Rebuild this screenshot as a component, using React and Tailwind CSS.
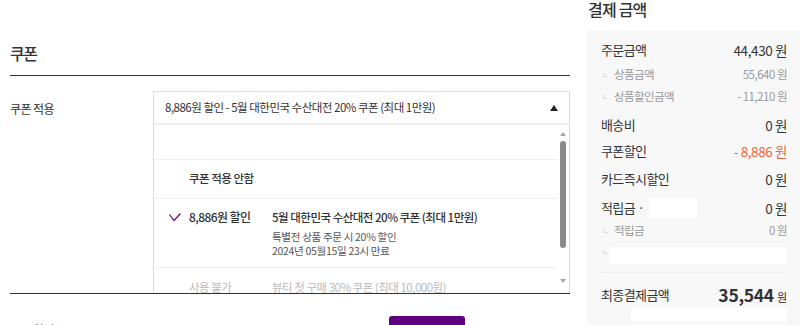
const font = "font-['Noto_Sans_CJK_KR','Noto_Sans',sans-serif]"

function Check() {
  return (
    <svg width="12" height="9" viewBox="0 0 12 9" className="shrink-0">
      <polyline points="0.5,1.5 5,7.5 11.5,0.5" fill="none" stroke="#5f0080" strokeWidth="1.2" />
    </svg>
  )
}

function Row({ label, value, className = '', valueClass = 'text-[#333]', children }) {
  return (
    <div className={`flex items-center justify-between h-[20px] ${className}`}>
      <div className="flex items-center text-[13px] text-[#333] tracking-[-0.6px]">
        {label}
        {children}
      </div>
      <div className={`text-[13.5px] tracking-[-0.4px] ${valueClass}`}>{value}</div>
    </div>
  )
}

function SubRow({ label, value, className = '' }) {
  return (
    <div className={`flex items-center justify-between h-[20px] ${className}`}>
      <div className="flex items-center text-[11.5px] text-[#999] tracking-[-0.6px]">
        <span className="text-[8px] text-[#ccc] w-[12px] ml-[1px]">ㄴ</span>
        {label}
      </div>
      <div className="text-[11.5px] text-[#999] tracking-[-0.5px]">{value}</div>
    </div>
  )
}

export default function App() {
  return (
    <div className={`w-[800px] h-[325px] overflow-hidden bg-white flex ${font}`}>
      {/* 쿠폰 */}
      <div className="w-[560px] ml-[10px] shrink-0">
        <div className="pt-[41px] pb-[10px] border-b border-[#333]">
          <h2 className="text-[16px] leading-[24px] font-medium text-[#333] tracking-[-1.5px]">쿠폰</h2>
        </div>

        <div className="flex pt-[15px] border-b border-[#333]">
          <div className="w-[143px] shrink-0 pt-[9px] text-[12px] leading-[18px] text-[#333] tracking-[-0.6px]">쿠폰 적용</div>

          {/* dropdown */}
          <div className="flex-1 border-x border-t border-[#ddd] h-[202px] flex flex-col">
            <div className="h-[33px] flex items-center justify-between pl-[11px] pr-[11px] border-b-2 border-[#f0f0f0] shrink-0">
              <span className="text-[11.5px] text-[#333] tracking-[-0.5px]">
                8,886원 할인 - 5월 대한민국 수산대전 20% 쿠폰 (최대 1만원)
              </span>
              <span className="w-0 h-0 border-x-[4px] border-x-transparent border-b-[6px] border-b-[#222]" />
            </div>
            <div className="flex flex-1 min-h-0 overflow-hidden">
              <div className="flex-1">
                <div className="h-[35px] border-b border-[#eee]" />
                <div className="h-[39px] border-b border-[#eee] flex items-center pl-[35px] text-[11.5px] font-medium text-[#333] tracking-[-0.5px]">
                  쿠폰 적용 안함
                </div>
                <div className="h-[69px] border-b border-[#eee] flex pt-[9px]">
                  <div className="w-[35px] flex justify-center pl-[6px] pt-[5px]">
                    <Check />
                  </div>
                  <div className="w-[83px] text-[12px] leading-[18px] font-medium text-[#333] tracking-[-0.6px]">8,886원 할인</div>
                  <div>
                    <div className="text-[11.5px] leading-[18px] font-medium text-[#333] tracking-[-0.5px]">
                      5월 대한민국 수산대전 20% 쿠폰 (최대 1만원)
                    </div>
                    <div className="mt-[4px] text-[10.5px] leading-[14px] text-[#555] tracking-[-0.3px]">
                      특별전 상품 주문 시 20% 할인
                    </div>
                    <div className="text-[10.5px] leading-[14px] text-[#555] tracking-[-0.3px]">2024년 05월15일 23시 만료</div>
                  </div>
                </div>
                <div className="flex pt-[10px] text-[11.5px] leading-[18px] text-[#bbb] tracking-[-0.5px]">
                  <div className="w-[35px]" />
                  <div className="w-[83px]">사용 불가</div>
                  <div>뷰티 첫 구매 30% 쿠폰 (최대 10,000원)</div>
                </div>
              </div>
              {/* scrollbar */}
              <div className="w-[12px] shrink-0 flex flex-col items-center pt-[7px]">
                <span className="w-0 h-0 border-x-[3.5px] border-x-transparent border-b-[4px] border-b-[#a3a3a3]" />
                <div className="mt-[5px] w-[6px] h-[107px] rounded-full bg-[#8a8a8a]" />
                <span className="mt-[31px] w-0 h-0 border-x-[3.5px] border-x-transparent border-t-[4px] border-t-[#a3a3a3]" />
              </div>
            </div>
          </div>
        </div>

        <div className="flex items-start pt-[22px]">
          <div className="w-[143px] shrink-0 pt-[5px] text-[12px] leading-[18px] text-[#333] tracking-[-0.6px]">즉시 할인</div>
          <div className="w-[236px] shrink-0 pt-[5px] text-[11.5px] leading-[18px] text-[#333] tracking-[-0.5px]">
            [현대카드] 첫 결제 2만원 할인
          </div>
          <div className="w-[76px] h-[30px] rounded-[3px] bg-[#5f0080]" />
        </div>
      </div>

      {/* 결제 금액 */}
      <div className="ml-[17px] flex-1 flex flex-col">
        <h3 className="h-[30px] pl-[1px] text-[16px] leading-[19px] font-medium text-[#333] tracking-[-0.8px]">결제 금액</h3>
        <div className="flex-1 bg-[#f8f8f8] pl-[14px] pr-[13px] pt-[10px]">
          <Row label="주문금액" value="44,430 원" />
          <SubRow label="상품금액" value="55,640 원" className="mt-[5px]" />
          <SubRow label="상품할인금액" value="- 11,210 원" className="mt-[2px]" />
          <Row label="배송비" value="0 원" className="mt-[8px]" />
          <Row label="쿠폰할인" value="- 8,886 원" className="mt-[6px]" valueClass="text-[#f0643c]" />
          <Row label="카드즉시할인" value="0 원" className="mt-[8px]" />
          <Row label="적립금 ·" value="0 원" className="mt-[9px]">
            <span className="ml-[5px] w-[48px] h-[20px] bg-white" />
          </Row>
          <SubRow label="적립금" value="0 원" className="mt-[3px]" />
          <div className="mt-[6px] flex items-start h-[17px]">
            <span className="text-[8px] leading-[10px] text-[#ccc] w-[8px] ml-[1px]">ㄴ</span>
            <div className="flex-1 h-[17px] bg-white" />
          </div>
          <div className="mt-[8px] border-t border-[#eee]" />
          <div className="mt-[11px] flex items-center justify-between h-[22px]">
            <span className="text-[13px] text-[#333] tracking-[-0.6px]">최종결제금액</span>
            <span className="text-[#333]">
              <span className="text-[17.5px] font-bold tracking-[-0.3px]">35,544</span>
              <span className="text-[11px] ml-[3px]">원</span>
            </span>
          </div>
          <div className="mt-[2px] ml-[30px] h-[13px] bg-white" />
        </div>
      </div>
    </div>
  )
}
